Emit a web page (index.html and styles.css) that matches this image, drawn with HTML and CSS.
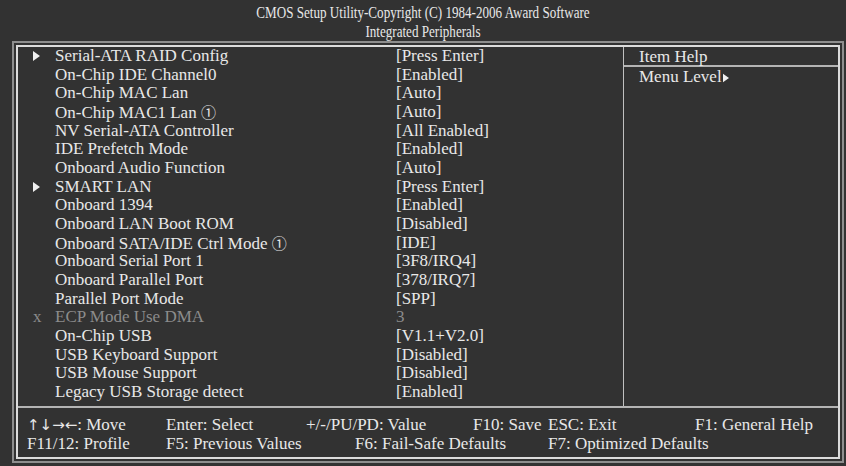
FILE: index.html
```html
<!DOCTYPE html>
<html lang="en">
<head>
    <meta charset="UTF-8">
    <title>CMOS Setup Utility - Integrated Peripherals</title>
    <link rel="stylesheet" href="styles.css">
</head>
<body>

    <div class="title">
        <div>CMOS Setup Utility-Copyright (C) 1984-2006 Award Software</div>
        <div>Integrated Peripherals</div>
    </div>

    <div class="frame">
        <div class="inner">
            <div class="main">
                <div class="list">
                    <div class="row"><span class="mark"><svg class="arrow" viewBox="0 0 7 10"><path d="M0 0L7 5L0 10Z"/></svg></span><span class="name">Serial-ATA RAID Config</span><span class="val">[Press Enter]</span></div>
                    <div class="row"><span class="mark"></span><span class="name">On-Chip IDE Channel0</span><span class="val">[Enabled]</span></div>
                    <div class="row"><span class="mark"></span><span class="name">On-Chip MAC Lan</span><span class="val">[Auto]</span></div>
                    <div class="row"><span class="mark"></span><span class="name">On-Chip MAC1 Lan <span class="circ">①</span></span><span class="val">[Auto]</span></div>
                    <div class="row"><span class="mark"></span><span class="name">NV Serial-ATA Controller</span><span class="val">[All Enabled]</span></div>
                    <div class="row"><span class="mark"></span><span class="name">IDE Prefetch Mode</span><span class="val">[Enabled]</span></div>
                    <div class="row"><span class="mark"></span><span class="name">Onboard Audio Function</span><span class="val">[Auto]</span></div>
                    <div class="row"><span class="mark"><svg class="arrow" viewBox="0 0 7 10"><path d="M0 0L7 5L0 10Z"/></svg></span><span class="name">SMART LAN</span><span class="val">[Press Enter]</span></div>
                    <div class="row"><span class="mark"></span><span class="name">Onboard 1394</span><span class="val">[Enabled]</span></div>
                    <div class="row"><span class="mark"></span><span class="name">Onboard LAN Boot ROM</span><span class="val">[Disabled]</span></div>
                    <div class="row"><span class="mark"></span><span class="name">Onboard SATA/IDE Ctrl Mode <span class="circ">①</span></span><span class="val">[IDE]</span></div>
                    <div class="row"><span class="mark"></span><span class="name">Onboard Serial Port 1</span><span class="val">[3F8/IRQ4]</span></div>
                    <div class="row"><span class="mark"></span><span class="name">Onboard Parallel Port</span><span class="val">[378/IRQ7]</span></div>
                    <div class="row"><span class="mark"></span><span class="name">Parallel Port Mode</span><span class="val">[SPP]</span></div>
                    <div class="row disabled"><span class="mark">x</span><span class="name">ECP Mode Use DMA</span><span class="val">3</span></div>
                    <div class="row"><span class="mark"></span><span class="name">On-Chip USB</span><span class="val">[V1.1+V2.0]</span></div>
                    <div class="row"><span class="mark"></span><span class="name">USB Keyboard Support</span><span class="val">[Disabled]</span></div>
                    <div class="row"><span class="mark"></span><span class="name">USB Mouse Support</span><span class="val">[Disabled]</span></div>
                    <div class="row"><span class="mark"></span><span class="name">Legacy USB Storage detect</span><span class="val">[Enabled]</span></div>
                </div>
                <div class="help">
                    <div class="help-head">Item Help</div>
                    <div class="help-body">Menu Level<svg class="arrow small" viewBox="0 0 7 10"><path d="M0 0L7 5L0 10Z"/></svg></div>
                </div>
            </div>
            <div class="keys">
                <div class="keyrow">
                    <span class="k1"><span class="sym">↑↓→←</span>: Move</span>
                    <span class="k2">Enter: Select</span>
                    <span class="k3">+/-/PU/PD: Value</span>
                    <span class="k4">F10: Save</span>
                    <span class="k5">ESC: Exit</span>
                    <span class="k6">F1: General Help</span>
                </div>
                <div class="keyrow">
                    <span class="k1">F11/12: Profile</span>
                    <span class="k2">F5: Previous Values</span>
                    <span class="k3b">F6: Fail-Safe Defaults</span>
                    <span class="k5">F7: Optimized Defaults</span>
                </div>
            </div>
        </div>
    </div>

</body>
</html>
```

FILE: styles.css
```css
body {
    margin: 0;
    background-color: #323232;
    color: #e8e8e8;
    font-family: "Liberation Serif", "DejaVu Serif", serif;
    font-size: 17px;
    width: 846px;
    height: 466px;
    overflow: hidden;
}
.title {
    height: 41px;
    text-align: center;
    font-size: 17px;
    line-height: 19px;
    padding-top: 3px;
    box-sizing: border-box;
}
.title div {
    transform: scaleX(0.77);
}
.frame {
    margin-left: 12px;
    width: 832px;
    height: 422px;
    box-sizing: border-box;
    border: 2px solid #8e8e8e;
    padding: 2px;
}
.inner {
    height: 100%;
    box-sizing: border-box;
    border: 2px solid #dcdcdc;
    display: flex;
    flex-direction: column;
}
.main {
    display: flex;
    height: 359px;
    border-bottom: 2px solid #b4b4b4;
}
.list {
    width: 605px;
}
.row {
    display: flex;
    height: 18.67px;
    line-height: 18.67px;
    white-space: nowrap;
}
.mark {
    width: 37px;
    padding-left: 15px;
    box-sizing: border-box;
    display: flex;
    align-items: center;
}
.name {
    width: 341px;
}
.disabled {
    color: #8c8c8c;
}
.arrow {
    width: 7px;
    height: 10px;
    fill: #f0f0f0;
}
.arrow.small {
    width: 6px;
    height: 10px;
    margin-left: 1px;
    vertical-align: -1px;
}
.circ {
    font-family: "Noto Sans CJK JP", "DejaVu Sans", sans-serif;
    font-size: 15px;
}
.help {
    flex: 1;
    border-left: 1px solid #c0c0c0;
}
.help-head {
    height: 18px;
    line-height: 19px;
    padding-left: 15px;
    border-bottom: 2px solid #b4b4b4;
}
.help-body {
    padding-left: 15px;
    line-height: 19px;
}
.keys {
    flex: 1;
    padding-top: 7px;
}
.keyrow {
    display: flex;
    height: 19px;
    line-height: 19px;
    white-space: nowrap;
}
.sym {
    font-family: "DejaVu Sans", sans-serif;
    font-size: 15px;
}
.k1 { margin-left: 9px; width: 139px; }
.k2 { width: 140px; }
.k3 { width: 167px; }
.k4 { width: 75px; }
.k5 { width: 147px; }
.k3b { margin-left: 49px; width: 193px; }
```
